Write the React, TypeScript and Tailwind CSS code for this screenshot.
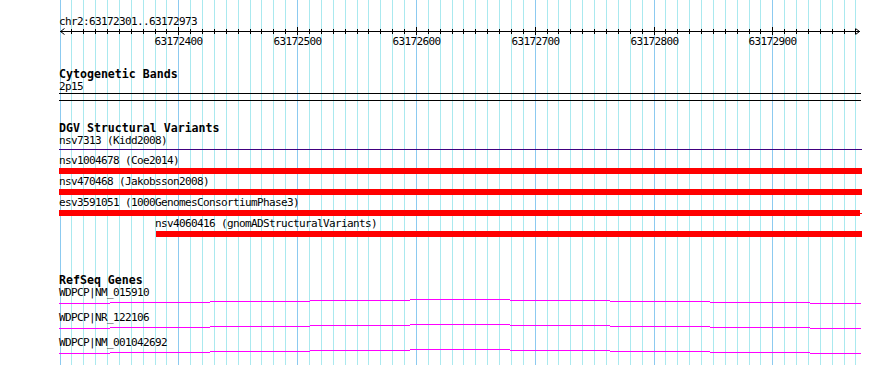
import React from 'react';

// 63172300 at x=59.5, 1.188 px per bp, one grid line per 10 bp
const GRID = Array.from({ length: 68 }, (_, k) => ({
  k,
  x: Math.round(59.5 + 11.88 * k) + 0.5,
  major: k % 10 === 0,
}));

// stepped magenta transcript line: [from, to, drop]
const GENE_SEGMENTS: [number, number, number][] = [
  [59, 110, 4],
  [110, 210, 3],
  [210, 310, 2],
  [310, 410, 1],
  [410, 510, 0],
  [510, 610, 1],
  [610, 710, 2],
  [710, 810, 3],
  [810, 861, 4],
];

const GENES = ['WDPCP|NM_015910', 'WDPCP|NR_122106', 'WDPCP|NM_001042692'];

function GridLines() {
  return (
    <svg className="absolute inset-0 pointer-events-none" width={890} height={365}>
      {GRID.map((g) => (
        <line
          key={g.k}
          x1={g.x}
          x2={g.x}
          y1={0}
          y2={365}
          stroke={g.major ? '#8ccaf0' : '#aae9ef'}
          strokeWidth={1}
        />
      ))}
    </svg>
  );
}

function Ruler() {
  return (
    <svg width={890} height={20} className="block overflow-visible">
      <line x1={60} x2={860} y1={3.5} y2={3.5} stroke="#000" />
      {/* arrow heads */}
      <path d="M64.5 0.5 L60.5 3.5 L64.5 6.5" fill="none" stroke="#000" />
      <path d="M855.5 0.5 L859.5 3.5 L855.5 6.5" fill="none" stroke="#000" />
      {GRID.filter((g) => g.k > 0).map((g) => (
        <line
          key={g.k}
          x1={g.x}
          x2={g.x}
          y1={g.major ? -1 : 1}
          y2={g.major ? 7 : 6}
          stroke="#000"
        />
      ))}
      {GRID.filter((g) => g.major && g.k > 0).map((g) => (
        <text
          key={g.k}
          x={g.x}
          y={16.5}
          textAnchor="middle"
          fontSize={11}
          letterSpacing={-0.62}
          fill="#000"
        >
          {63172300 + g.k * 10}
        </text>
      ))}
    </svg>
  );
}

function TrackTitle({ children, className = '' }: { children: React.ReactNode; className?: string }) {
  return (
    <div className={`pl-[59px] h-[12px] leading-[12px] text-[11.6px] font-bold text-black ${className}`}>
      {children}
    </div>
  );
}

function Label({ children, className = '' }: { children: React.ReactNode; className?: string }) {
  return (
    <div className={`h-[13px] leading-[13px] text-[11px] tracking-[-0.62px] text-black whitespace-nowrap ${className}`}>
      {children}
    </div>
  );
}

function GeneLine() {
  return (
    <div className="flex items-start h-[5px] ml-[59px]">
      {GENE_SEGMENTS.map(([from, to, drop], i) => (
        <div
          key={i}
          className="h-px bg-[#ff00ff] shrink-0"
          style={{ width: to - from, marginTop: drop }}
        />
      ))}
    </div>
  );
}

export default function App() {
  return (
    <div className="relative w-[890px] h-[365px] bg-white overflow-hidden font-['DejaVu_Sans_Mono',monospace]">
      <GridLines />

      <div className="relative flex flex-col">
        {/* overview ruler */}
        <div className="h-[28px] pt-[15px]">
          <Label className="pl-[59px]">chr2:63172301..63172973</Label>
        </div>
        <Ruler />

        {/* cytobands */}
        <TrackTitle className="mt-[20px]">Cytogenetic Bands</TrackTitle>
        <Label className="pl-[59px]">2p15</Label>
        <div className="ml-[59px] w-[802px] h-[8px] border-y border-black" />

        {/* DGV */}
        <TrackTitle className="mt-[21px]">DGV Structural Variants</TrackTitle>
        <Label className="pl-[59px]">nsv7313 (Kidd2008)</Label>
        <div className="mt-[2px] ml-[59px] w-[803px] h-px bg-[#400080]" />

        <Label className="mt-[4px] pl-[59px]">nsv1004678 (Coe2014)</Label>
        <div className="mt-[1px] ml-[59px] w-[803px] h-[6px] bg-[#ff0000]" />

        <Label className="mt-[1px] pl-[59px]">nsv470468 (Jakobsson2008)</Label>
        <div className="mt-[1px] ml-[59px] w-[803px] h-[6px] bg-[#ff0000]" />

        <Label className="mt-[1px] pl-[59px]">esv3591051 (1000GenomesConsortiumPhase3)</Label>
        <div className="mt-[1px] ml-[59px] flex items-center h-[6px]">
          <div className="w-[801px] h-[6px] bg-[#ff0000]" />
          <div className="w-[2px] h-px bg-[#ff0000]" />
        </div>

        <Label className="mt-[1px] pl-[155px]">nsv4060416 (gnomADStructuralVariants)</Label>
        <div className="mt-[1px] ml-[156px] w-[706px] h-[6px] bg-[#ff0000]" />

        {/* RefSeq */}
        <TrackTitle className="mt-[37px]">RefSeq Genes</TrackTitle>
        {GENES.map((g, i) => (
          <div key={g} className={i === 0 ? '' : 'mt-[7px]'}>
            <Label className="pl-[59px]">{g}</Label>
            <GeneLine />
          </div>
        ))}
      </div>
    </div>
  );
}
